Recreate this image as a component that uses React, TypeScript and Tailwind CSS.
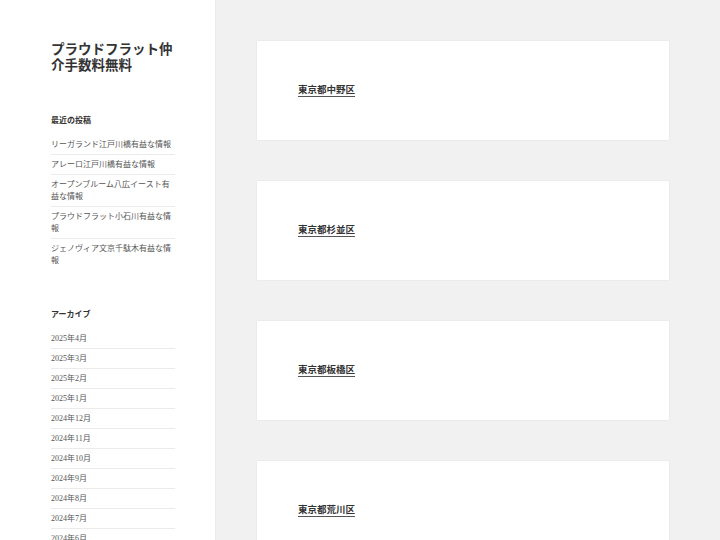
import React from "react";

const recent = [
  "リーガランド江戸川橋有益な情報",
  "アレーロ江戸川橋有益な情報",
  "オープンブルーム八広イースト有益な情報",
  "プラウドフラット小石川有益な情報",
  "ジェノヴィア文京千駄木有益な情報",
];

const archives = [
  "2025年4月",
  "2025年3月",
  "2025年2月",
  "2025年1月",
  "2024年12月",
  "2024年11月",
  "2024年10月",
  "2024年9月",
  "2024年8月",
  "2024年7月",
  "2024年6月",
  "2024年5月",
  "2024年4月",
];

const posts = ["東京都中野区", "東京都杉並区", "東京都板橋区", "東京都荒川区", "東京都足立区"];

const font = { fontFamily: '"Liberation Serif", "Noto Sans CJK JP", serif' };

export default function App() {
  return (
    <div
      className="flex h-screen w-full overflow-hidden bg-[#f1f1f1] text-[#333]"
      style={font}
    >
      <aside className="w-[215px] shrink-0 bg-white pl-[51px] pr-[40px] pt-[42px] shadow-[0_0_1px_rgba(0,0,0,0.15)]">
        <h1 className="text-[13.5px] font-bold leading-[16px] text-[#333]">
          プラウドフラット仲介手数料無料
        </h1>

        <section className="mt-[41px]">
          <h2 className="mb-[8px] text-[8px] font-bold leading-[12px] text-[#333]">最近の投稿</h2>
          <ul>
            {recent.map((t, i) => (
              <li
                key={t}
                className={
                  "pt-[4px] pb-[3px] text-[8px] leading-[12px] text-[#555] " +
                  (i > 0 ? "border-t border-[#ebebeb]" : "")
                }
              >
                <a>{t}</a>
              </li>
            ))}
          </ul>
        </section>

        <section className="mt-[39px]">
          <h2 className="mb-[8px] text-[8px] font-bold leading-[12px] text-[#333]">アーカイブ</h2>
          <ul>
            {archives.map((t, i) => (
              <li
                key={t}
                className={
                  "pt-[4px] pb-[3px] text-[8px] leading-[12px] text-[#555] " +
                  (i > 0 ? "border-t border-[#ebebeb]" : "")
                }
              >
                <a>{t}</a>
              </li>
            ))}
          </ul>
        </section>
      </aside>

      <main className="flex flex-1 flex-col gap-[41px] pl-[42px] pr-[51px] pt-[41px]">
        {posts.map((p) => (
          <article
            key={p}
            className="shrink-0 bg-white px-[41px] py-[41px] shadow-[0_0_1px_rgba(0,0,0,0.15)]"
          >
            <h2 className="text-[9.5px] font-bold leading-[17px]">
              <a className="border-b border-[#555] pb-[1px]">{p}</a>
            </h2>
          </article>
        ))}
      </main>
    </div>
  );
}
